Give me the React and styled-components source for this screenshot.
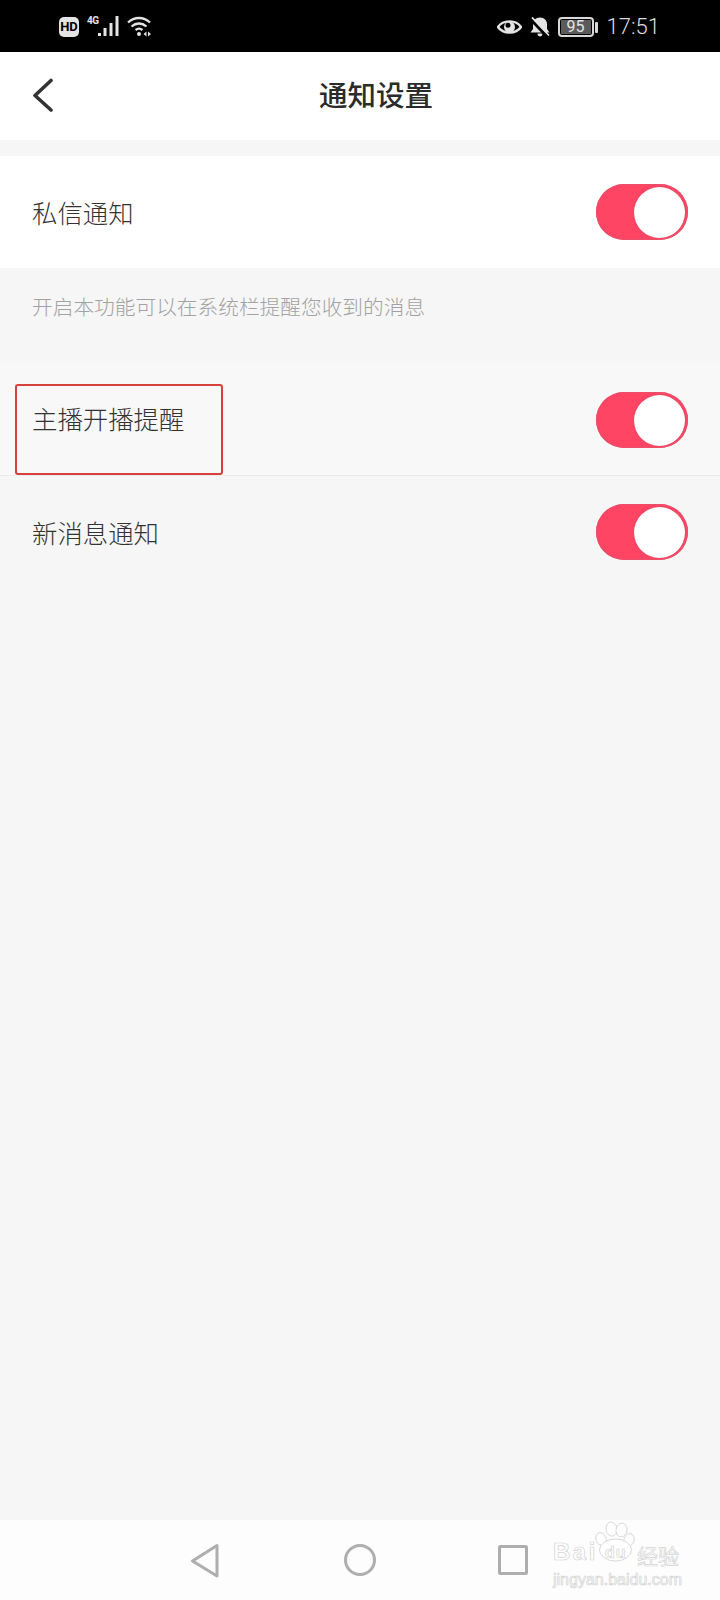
import React from "react";
import styled, { createGlobalStyle } from "styled-components";

const Global = createGlobalStyle`
  html, body { margin: 0; padding: 0; background: #f6f6f6; }
  * { box-sizing: border-box; }
  body { font-family: "Noto Sans CJK SC", "Noto Sans", sans-serif; }
`;

const Page = styled.div`
  position: relative;
  width: 720px;
  height: 1600px;
  display: flex;
  flex-direction: column;
  background: #f6f6f6;
  overflow: hidden;
`;

const StatusBar = styled.div`
  height: 52px;
  flex: none;
  background: #000;
  color: #e4e4e4;
  display: flex;
  align-items: center;
  justify-content: space-between;
  padding: 2px 60px 0 59px;
`;
const StatusGroup = styled.div`
  display: flex;
  align-items: center;
  height: 22px;
`;
const HdBadge = styled.div`
  width: 20px;
  height: 20px;
  border-radius: 5px;
  background: #e4e4e4;
  color: #000;
  font: 700 13px/20px "Roboto", sans-serif;
  text-align: center;
`;
const NetLabel = styled.span`
  align-self: flex-start;
  width: 11px;
  margin-left: 8px;
  font: 700 10px/10px "Roboto", sans-serif;
  letter-spacing: -0.4px;
  white-space: nowrap;
`;
const WifiIcon = styled.svg`
  margin-left: 7px;
`;
const BellIcon = styled.svg`
  margin-left: 8px;
`;
const Battery = styled.div`
  width: 36px;
  height: 20px;
  border: 2px solid #d8d8d8;
  border-radius: 4px;
  padding: 1px;
  margin-left: 8px;
  display: flex;
`;
const BatteryFill = styled.div`
  flex: 1;
  background: #5a5a5a;
  color: #e4e4e4;
  font: 400 16px/14px "Roboto", sans-serif;
  text-align: center;
`;
const BatteryTip = styled.div`
  width: 3px;
  height: 11px;
  background: #d8d8d8;
  border-radius: 1px;
  margin-left: 1px;
`;
const Clock = styled.span`
  font: 300 22px/26px "Roboto", sans-serif;
  margin-left: 9px;
  color: #dcdcdc;
`;

const Header = styled.header`
  position: relative;
  height: 88px;
  flex: none;
  background: #fff;
  display: flex;
  align-items: center;
  justify-content: center;
  padding: 0 0 3px 32px;
`;
const BackButton = styled.svg`
  position: absolute;
  left: 32px;
  top: 26px;
`;
const Title = styled.h1`
  margin: 0;
  font-size: 28.5px;
  font-weight: 500;
  color: #2b2b2b;
  line-height: 1;
`;

const Section = styled.section`
  margin-top: ${(p) => p.$top || 0}px;
`;
const Row = styled.div`
  height: ${(p) => p.$h}px;
  padding: ${(p) => p.$pad || 0}px 32px 0 32px;
  display: flex;
  align-items: ${(p) => (p.$pad ? "flex-start" : "center")};
  justify-content: space-between;
  background: ${(p) => p.$bg};
  border-bottom: ${(p) => (p.$line ? "1px solid #ececec" : "none")};
`;
const Label = styled.span`
  font-size: 25.4px;
  font-weight: 300;
  color: #333;
  line-height: 56px;
  margin-top: ${(p) => p.$shift || 0}px;
`;
const Note = styled.p`
  margin: 0;
  height: 96px;
  padding: 23px 32px 0;
  font-size: 20.7px;
  font-weight: 300;
  line-height: 30px;
  color: #a2a2a2;
`;
const Toggle = styled.div`
  width: 92px;
  height: 56px;
  border-radius: 28px;
  background: #ff4563;
  box-shadow: inset 0 0 0 1px #e9506c;
  display: flex;
  align-items: center;
  justify-content: flex-end;
  padding-right: 3px;
`;
const Knob = styled.div`
  width: 51px;
  height: 51px;
  border-radius: 50%;
  background: #fff;
  box-shadow: 0 0 1px #a8415a;
`;

const Highlight = styled.div`
  position: absolute;
  left: 15px;
  top: 384px;
  width: 208px;
  height: 91px;
  border: 2px solid #d8403c;
  border-radius: 3px;
`;

const Spacer = styled.div`
  flex: 1;
`;

const NavBar = styled.nav`
  position: relative;
  height: 80px;
  flex: none;
  background: #fdfdfd;
`;
const NavIcon = styled.svg`
  position: absolute;
  left: ${(p) => p.$x}px;
  top: ${(p) => p.$y}px;
`;
const Watermark = styled.div`
  position: absolute;
  left: 550px;
  top: 0;
  width: 140px;
  height: 80px;
`;
const PawMark = styled.svg`
  position: absolute;
  left: 45px;
  top: 0;
`;
const Mark = styled.span`
  position: absolute;
  left: ${(p) => p.$x}px;
  top: ${(p) => p.$y}px;
  font: ${(p) => p.$weight || 700} ${(p) => p.$size}px/1 ${(p) => p.$family || `"Liberation Sans", sans-serif`};
  letter-spacing: ${(p) => p.$track || 0}px;
  color: #fff;
  -webkit-text-stroke: 0.7px #d4d4d4;
  white-space: nowrap;
`;

function Switch() {
  return (
    <Toggle>
      <Knob />
    </Toggle>
  );
}

export default function App() {
  return (
    <Page>
      <Global />
      <StatusBar>
        <StatusGroup>
          <HdBadge>HD</HdBadge>
          <NetLabel>4G</NetLabel>
          <svg width="22" height="22" viewBox="0 0 22 22" fill="#e4e4e4">
            <rect x="0" y="17" width="3" height="3" />
            <rect x="5.500" y="12" width="3" height="8" />
            <rect x="11.500" y="7" width="3" height="13" />
            <rect x="17.500" y="0" width="3" height="20" />
          </svg>
          <WifiIcon width="25" height="22" viewBox="0 0 25 22" fill="none" stroke="#e4e4e4" strokeWidth="2.300">
            <path d="M1 6.500C7.500 0.500 16.500 0.500 23 6.500" />
            <path d="M4.500 10.500C9 6.500 15 6.500 19.500 10.500" />
            <path d="M8.500 14C10.500 12.500 13.500 12.500 15.500 14" />
            <circle cx="12" cy="18" r="2" fill="#e4e4e4" stroke="none" />
            <path d="M19.500 15.500l-3 2.500 3 2.500zM21 15.500l3 2.500-3 2.500z" fill="#e4e4e4" stroke="none" />
          </WifiIcon>
        </StatusGroup>
        <StatusGroup>
          <svg width="25" height="18" viewBox="0 0 25 18">
            <path d="M1 9C6 1.500 19 1.500 24 9C19 16.500 6 16.500 1 9Z" fill="none" stroke="#e4e4e4" strokeWidth="2.400" />
            <circle cx="12.500" cy="9" r="5.500" fill="#e4e4e4" />
            <circle cx="11" cy="7.200" r="2.500" fill="#000" />
          </svg>
          <BellIcon width="20" height="20" viewBox="0 0 20 20">
            <path d="M10 0.500c-4.500 0-7 3-7 6.500v5L0.500 15.500h19L17 12V7c0-3.500-2.500-6.500-7-6.500z" fill="#e4e4e4" />
            <path d="M7.500 16.500h5c0 1.700-1 3-2.500 3s-2.500-1.300-2.500-3z" fill="#e4e4e4" />
            <path d="M0.500 2l17 18" stroke="#000" strokeWidth="3" />
            <path d="M2 0.500l17 18" stroke="#e4e4e4" strokeWidth="1.800" />
          </BellIcon>
          <Battery>
            <BatteryFill>95</BatteryFill>
          </Battery>
          <BatteryTip />
          <Clock>17:51</Clock>
        </StatusGroup>
      </StatusBar>

      <Header>
        <BackButton width="22" height="34" viewBox="0 0 22 34" fill="none" stroke="#333" strokeWidth="3.600" strokeLinecap="round" strokeLinejoin="round">
          <path d="M19 2.500L3 17.500L19 32" />
        </BackButton>
        <Title>通知设置</Title>
      </Header>

      <Section $top={16}>
        <Row $h={112} $bg="#fff">
          <Label>私信通知</Label>
          <Switch />
        </Row>
        <Note>开启本功能可以在系统栏提醒您收到的消息</Note>
      </Section>

      <Section>
        <Row $h={112} $pad={28} $bg="#f8f8f8" $line>
          <Label $shift={-2}>主播开播提醒</Label>
          <Switch />
        </Row>
        <Row $h={112} $pad={28} $bg="#f6f6f6">
          <Label>新消息通知</Label>
          <Switch />
        </Row>
      </Section>

      <Highlight />
      <Spacer />

      <NavBar>
        <NavIcon $x={190} $y={23} width="30" height="36" viewBox="0 0 30 36" fill="none" stroke="#aeaeae" strokeWidth="3" strokeLinejoin="round">
          <path d="M27 2.500V33L2.500 18Z" />
        </NavIcon>
        <NavIcon $x={343} $y={23} width="34" height="34" viewBox="0 0 34 34" fill="none" stroke="#aeaeae" strokeWidth="3">
          <circle cx="17" cy="17" r="14.500" />
        </NavIcon>
        <NavIcon $x={497} $y={24} width="32" height="32" viewBox="0 0 32 32" fill="none" stroke="#aeaeae" strokeWidth="3" strokeLinejoin="round">
          <rect x="2.500" y="2.500" width="27" height="27" rx="1" />
        </NavIcon>
        <Watermark>
          <Mark $x={3} $y={20} $size={24} $track={2.500}>Bai</Mark>
          <PawMark width="42" height="44" viewBox="0 0 42 44" fill="#fff" stroke="#d4d4d4" strokeWidth="0.900">
            <ellipse cx="16.500" cy="9" rx="5.500" ry="7" transform="rotate(-8 16.500 9)" />
            <ellipse cx="26.500" cy="10" rx="5.500" ry="7" transform="rotate(10 26.500 10)" />
            <ellipse cx="6" cy="19" rx="5" ry="6.500" transform="rotate(-20 6 19)" />
            <ellipse cx="34" cy="20" rx="5" ry="6.500" transform="rotate(20 34 20)" />
            <ellipse cx="20.500" cy="30" rx="16" ry="11" />
          </PawMark>
          <Mark $x={55} $y={25} $size={16} $track={1}>du</Mark>
          <Mark $x={87} $y={25} $size={21} $weight={400} $family={`"Noto Sans CJK SC", sans-serif`}>经验</Mark>
          <Mark $x={3} $y={52} $size={16} $weight={400}>jingyan.baidu.com</Mark>
        </Watermark>
      </NavBar>
    </Page>
  );
}
